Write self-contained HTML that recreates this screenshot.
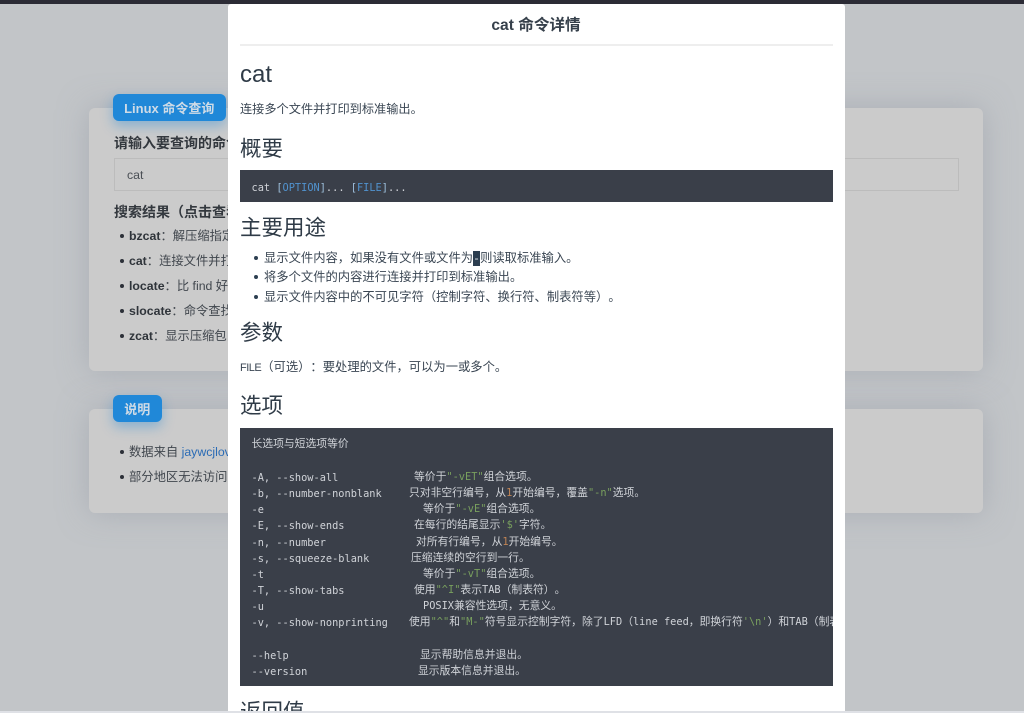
<!DOCTYPE html>
<html lang="zh"><head><meta charset="utf-8"><title>cat 命令详情</title>
<style>
html,body{margin:0;padding:0;width:1024px;height:713px;overflow:hidden;background:#c2c5c8;}
body{position:relative;font-family:"Liberation Sans","Noto Sans CJK SC",sans-serif;color:#39424c;text-spacing-trim:space-all;}
.t{position:absolute;white-space:nowrap;line-height:20px;}
.panel{position:absolute;left:89px;width:894px;background:#cbcbcb;border-radius:6px;box-shadow:0 0 30px rgba(150,155,165,.55);}
.tag{position:absolute;background:#2088d8;color:#cfdbe6;font-weight:bold;font-size:13px;border-radius:6px;text-align:center;box-shadow:0 5px 12px rgba(32,136,216,.4);line-height:30px;height:27px;}
.b{font-size:12.3px;color:#40464d}
.b b{color:#2f343a}
.dot{position:absolute;width:4px;height:4px;border-radius:50%;background:#2c3038;}
.dot2{position:absolute;width:4px;height:4px;border-radius:50%;background:#2c3e50;}
#modal{position:absolute;left:228px;top:4px;width:616.5px;height:707px;background:#fff;border-radius:3px 3px 0 0;overflow:hidden;}
#modal .t{color:#3a4653}
.h1{font-size:24px;color:#2f3b47 !important}
.h2{font-size:21.5px;color:#2f3b47 !important}
.p{font-size:12.2px}
.li{font-size:12.3px}
.code{position:absolute;left:12px;width:593px;background:#3a3f49;overflow:hidden;color:#d0d3d8;}
.l{position:absolute;white-space:nowrap;font-family:"DejaVu Sans Mono","Liberation Mono",monospace;font-size:10.3px;line-height:16px;color:#d0d3d8;}
.m{margin-top:2px}
.l u{text-decoration:none;font-family:"Noto Sans CJK SC",sans-serif;font-size:10.8px;}
.g{color:#79a05e}.o{color:#c08455}.s{color:#5193cf}
</style></head><body>
<div style="position:absolute;left:0;top:0;width:1024px;height:4px;background:#2b2b35"></div>

<div class="panel" style="top:108px;height:263px"></div>
<div class="panel" style="top:409px;height:104px"></div>
<div class="tag" style="left:112.5px;top:94px;width:113.5px">Linux 命令查询</div>
<div class="tag" style="left:112.5px;top:395px;width:49.5px">说明</div>

<div class="t" style="left:114px;top:133px;font-size:14px;font-weight:bold;color:#33383e">请输入要查询的命令</div>
<div style="position:absolute;left:114px;top:158px;width:843px;height:31px;border:1px solid #bcbcbc"></div>
<div class="t" style="left:127px;top:165px;font-size:12.3px;color:#4a4f55">cat</div>
<div class="t" style="left:114px;top:202px;font-size:14px;font-weight:bold;color:#33383e">搜索结果（点击查看详情）</div>

<div class="dot" style="left:120px;top:234px"></div><div class="t b" style="left:129px;top:226px"><b>bzcat</b>：解压缩指定文件</div>
<div class="dot" style="left:120px;top:259px"></div><div class="t b" style="left:129px;top:251px"><b>cat</b>：连接文件并打印</div>
<div class="dot" style="left:120px;top:284px"></div><div class="t b" style="left:129px;top:276px"><b>locate</b>：比 find 好用</div>
<div class="dot" style="left:120px;top:309px"></div><div class="t b" style="left:129px;top:301px"><b>slocate</b>：命令查找</div>
<div class="dot" style="left:120px;top:334px"></div><div class="t b" style="left:129px;top:326px"><b>zcat</b>：显示压缩包内容</div>

<div class="dot" style="left:120px;top:450px"></div><div class="t b" style="left:129px;top:442px">数据来自 <span style="color:#2a6bb5">jaywcjlove</span></div>
<div class="dot" style="left:120px;top:475px"></div><div class="t b" style="left:129px;top:467px">部分地区无法访问</div>

<div id="modal">
 <div class="t" style="left:0;width:616px;text-align:center;top:12px;font-size:15.6px;font-weight:bold;color:#36404b">cat 命令详情</div>
 <div style="position:absolute;left:12px;top:40px;width:593px;height:2px;background:#eeeeee"></div>
 <div class="t h1" style="left:12px;top:61px">cat</div>
 <div class="t p" style="left:12px;top:95px">连接多个文件并打印到标准输出。</div>
 <div class="t h2" style="left:12px;top:135px">概要</div>
 <div class="code" style="top:166px;height:32px">
  <div class="l m" style="left:11.5px;top:8px">cat <span class="s" style="color:#9fc0dc">[</span><span class="s">OPTION</span><span class="s" style="color:#9fc0dc">]</span>... <span style="color:#9fc0dc">[</span><span class="s">FILE</span><span style="color:#9fc0dc">]</span>...</div>
 </div>
 <div class="t h2" style="left:12px;top:214px">主要用途</div>
 <div class="dot2" style="left:26px;top:252px"></div>
 <div class="t li" style="left:36px;top:244px">显示文件内容，如果没有文件或文件为<span style="background:#2c3e50;color:#dfe5ea;display:inline-block;width:7px;text-align:center;line-height:15px">-</span>则读取标准输入。</div>
 <div class="dot2" style="left:26px;top:271px"></div>
 <div class="t li" style="left:36px;top:263px">将多个文件的内容进行连接并打印到标准输出。</div>
 <div class="dot2" style="left:26px;top:291px"></div>
 <div class="t li" style="left:36px;top:283px">显示文件内容中的不可见字符（控制字符、换行符、制表符等）。</div>
 <div class="t h2" style="left:12px;top:319px">参数</div>
 <div class="t li" style="left:12px;top:353px"><span style="font-size:11px;letter-spacing:-.5px">FILE</span>（可选）：要处理的文件，可以为一或多个。</div>
 <div class="t h2" style="left:12px;top:392px">选项</div>
 <div class="code" style="top:424px;height:258px">
  <div class="l" style="left:11.5px;top:7px"><u>长选项与短选项等价</u></div>
  <div class="l m" style="left:11.5px;top:40px">-A, --show-all</div><div class="l" style="left:174px;top:40px"><u>等价于</u><span class="g">"-vET"</span><u>组合选项。</u></div>
  <div class="l m" style="left:11.5px;top:56px">-b, --number-nonblank</div><div class="l" style="left:169px;top:56px"><u>只对非空行编号，从</u><span class="o">1</span><u>开始编号，覆盖</u><span class="g">"-n"</span><u>选项。</u></div>
  <div class="l m" style="left:11.5px;top:72px">-e</div><div class="l" style="left:183px;top:72px"><u>等价于</u><span class="g">"-vE"</span><u>组合选项。</u></div>
  <div class="l m" style="left:11.5px;top:88px">-E, --show-ends</div><div class="l" style="left:174px;top:88px"><u>在每行的结尾显示</u><span class="g">'$'</span><u>字符。</u></div>
  <div class="l m" style="left:11.5px;top:105px">-n, --number</div><div class="l" style="left:176px;top:105px"><u>对所有行编号，从</u><span class="o">1</span><u>开始编号。</u></div>
  <div class="l m" style="left:11.5px;top:121px">-s, --squeeze-blank</div><div class="l" style="left:171px;top:121px"><u>压缩连续的空行到一行。</u></div>
  <div class="l m" style="left:11.5px;top:137px">-t</div><div class="l" style="left:183px;top:137px"><u>等价于</u><span class="g">"-vT"</span><u>组合选项。</u></div>
  <div class="l m" style="left:11.5px;top:153px">-T, --show-tabs</div><div class="l" style="left:174px;top:153px"><u>使用</u><span class="g">"^I"</span><u>表示</u>TAB<u>（制表符）。</u></div>
  <div class="l m" style="left:11.5px;top:169px">-u</div><div class="l" style="left:183px;top:169px">POSIX<u>兼容性选项，无意义。</u></div>
  <div class="l m" style="left:11.5px;top:185px">-v, --show-nonprinting</div><div class="l" style="left:169px;top:185px"><u>使用</u><span class="g">"^"</span><u>和</u><span class="g">"M-"</span><u>符号显示控制字符，除了</u>LFD<u>（</u>line feed<u>，即换行符</u><span class="g">'\n'</span><u>）和</u>TAB<u>（制表符）之外。</u></div>
  <div class="l m" style="left:11.5px;top:218px">--help</div><div class="l" style="left:180px;top:218px"><u>显示帮助信息并退出。</u></div>
  <div class="l m" style="left:11.5px;top:234px">--version</div><div class="l" style="left:178px;top:234px"><u>显示版本信息并退出。</u></div>
 </div>
 <div class="t h2" style="left:12px;top:698px">返回值</div>
</div>
<div style="position:absolute;left:0;top:711px;width:1024px;height:2px;background:#dfe1e6"></div>
</body></html>
